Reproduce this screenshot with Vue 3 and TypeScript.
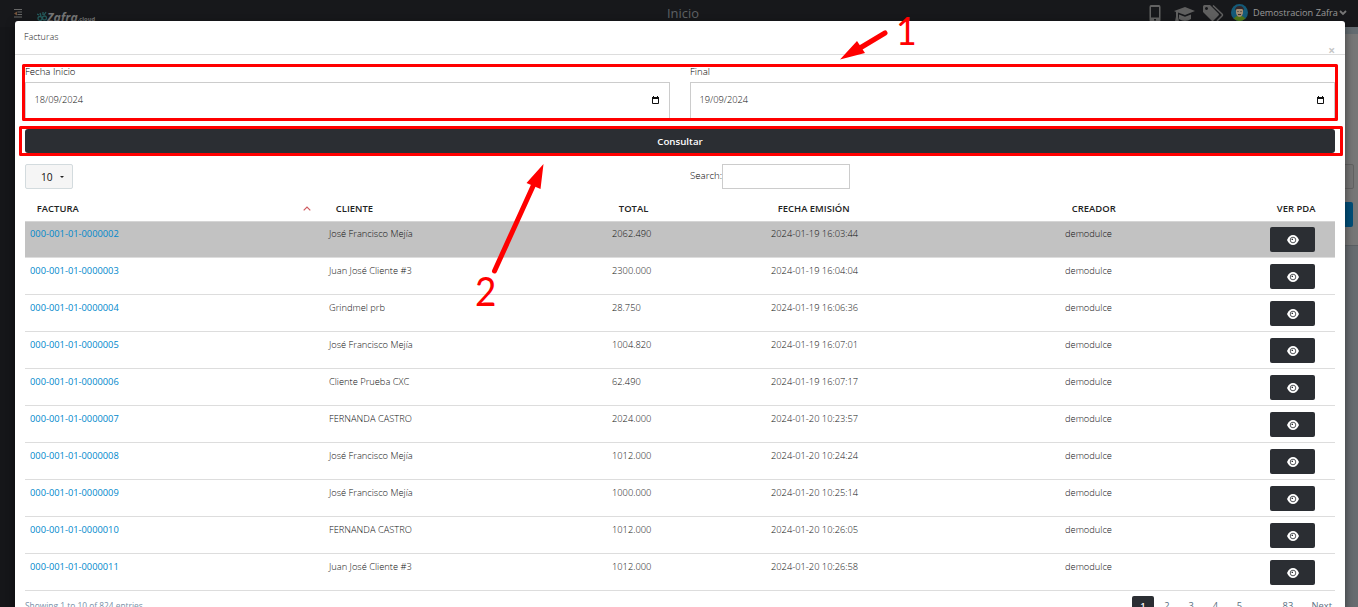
<script setup lang="ts">
interface Invoice {
  id: string
  client: string
  total: string
  date: string
}

const invoices: Invoice[] = [
  { id: '000-001-01-0000002', client: 'José Francisco Mejía', total: '2062.490', date: '2024-01-19 16:03:44' },
  { id: '000-001-01-0000003', client: 'Juan José Cliente #3', total: '2300.000', date: '2024-01-19 16:04:04' },
  { id: '000-001-01-0000004', client: 'Grindmel prb', total: '28.750', date: '2024-01-19 16:06:36' },
  { id: '000-001-01-0000005', client: 'José Francisco Mejía', total: '1004.820', date: '2024-01-19 16:07:01' },
  { id: '000-001-01-0000006', client: 'Cliente Prueba CXC', total: '62.490', date: '2024-01-19 16:07:17' },
  { id: '000-001-01-0000007', client: 'FERNANDA CASTRO', total: '2024.000', date: '2024-01-20 10:23:57' },
  { id: '000-001-01-0000008', client: 'José Francisco Mejía', total: '1012.000', date: '2024-01-20 10:24:24' },
  { id: '000-001-01-0000009', client: 'José Francisco Mejía', total: '1000.000', date: '2024-01-20 10:25:14' },
  { id: '000-001-01-0000010', client: 'FERNANDA CASTRO', total: '1012.000', date: '2024-01-20 10:26:05' },
  { id: '000-001-01-0000011', client: 'Juan José Cliente #3', total: '1012.000', date: '2024-01-20 10:26:58' },
]
const headers = ['FACTURA', 'CLIENTE', 'TOTAL', 'FECHA EMISIÓN', 'CREADOR', 'VER PDA']
const dates = [
  { label: 'Fecha Inicio', value: '18/09/2024' },
  { label: 'Final', value: '19/09/2024' },
]
const pages = ['1', '2', '3', '4', '5', '…', '83', 'Next']
</script>

<template>
  <div class="screen">
    <header class="topbar">
      <svg class="menu-icon" width="9" height="9" viewBox="0 0 9 9">
        <path d="M0 .5h8M3.500 3h4.500M3.500 5.500h4.500M0 8h8" stroke="#686868" stroke-width="1" />
        <path d="M3 2.500v4L0 4.500z" fill="#76543b" />
      </svg>
      <div class="brand">
        <svg width="10" height="11" viewBox="0 0 10 11" fill="none" stroke="#245a5b" stroke-width="1.300">
          <circle cx="3" cy="7.500" r="2" /><circle cx="7.500" cy="7" r="2" />
          <path d="M0 3l2 1M3 2l1 3M9 1L7 4M6 1v3" />
        </svg>
        <b>Zafra</b><small>.cloud</small>
      </div>
      <div class="page-title">Inicio</div>
      <div class="tools">
        <svg class="phone" width="12" height="18" viewBox="0 0 12 18">
          <path fill="#626262" fill-rule="evenodd" d="M2 0h8q1.500 0 1.500 2v13q0 2-1.500 2H2Q.5 17 .5 15V2Q.5 0 2 0zm0 2v10.500h8V2zm3 12v1.500h2V14z" />
        </svg>
        <svg class="cap" width="21" height="16" viewBox="0 0 21 16">
          <path fill="#5f5f5f" d="M0 4L11 0l10 4-10 4-7-2.500v4l1 5H1l1-5V5zM5 7.500l6 2.300 6-2.300V12q-6 4-12 0z" />
        </svg>
        <svg class="tags" width="21" height="18" viewBox="0 0 21 18">
          <path fill="#5f5f5f" fill-rule="evenodd" d="M0 1.500Q0 0 1.500 0H7l8.500 8.500q1 1 0 2l-5 5q-1 1-2 0L0 7zM3.500 2A1.500 1.500 0 1 0 3.510 2z" />
          <path fill="none" stroke="#5f5f5f" stroke-width="1.500" d="M10 .5l9 8.500q1 1 0 2L14 16" />
        </svg>
        <svg class="avatar" width="17" height="17" viewBox="0 0 17 17">
          <circle cx="8.500" cy="8.500" r="8.500" fill="#145a78" />
          <path d="M2.500 14.500q6-6 12 0-6 5-12 0" fill="#527817" />
          <path d="M5 5h7v4q-1 4-3.500 4T5 9z" fill="#a08b72" />
          <path d="M4 6.500q0-4.500 4.500-4.500T13 6.500l-2-1.500H6z" fill="#34282a" />
          <path d="M6.500 7.500h1M9.500 7.500h1M7 10.500h3" stroke="#342f2f" />
        </svg>
        <span>Demostracion Zafra</span>
        <svg class="chev" width="8" height="6" viewBox="0 0 8 6"><path d="M1 1l3 3 3-3" fill="none" stroke="#777" stroke-width="1.800" /></svg>
      </div>
    </header>
    <div class="backdrop">
      <div class="side" />
      <div class="under">
        <div class="strip" />
        <div class="panel"><i class="ghost-input" /><i class="ghost-button" /></div>
        <div class="ground" />
      </div>
    </div>

    <section class="modal">
      <div class="modal-head"><span>Facturas</span><span class="close">×</span></div>
      <div class="body">
        <div class="dates">
          <div v-for="d in dates" :key="d.label" class="field">
            <label>{{ d.label }}</label>
            <div class="input">
              <span>{{ d.value }}</span>
              <svg width="7" height="8" viewBox="0 0 7 8"><path d="M.5 1.500h6v6h-6z" fill="none" stroke="#111" /><path d="M0 1h7v2H0zM1 0h1v1H1zM5 0h1v1H5z" fill="#111" /></svg>
            </div>
          </div>
        </div>
        <button class="query">Consultar</button>
        <div class="controls">
          <div class="length"><span>10</span><i /></div>
          <div class="search"><span>Search:</span><div class="search-box" /></div>
        </div>
        <div class="row thead">
          <div v-for="(h, i) in headers" :key="h" class="th">
            <span>{{ h }}</span>
            <svg v-if="i === 0" width="8" height="5" viewBox="0 0 8 5"><path d="M.7 4.300L4 1l3.300 3.300" fill="none" stroke="#cf5a5f" stroke-width="1.200" /></svg>
          </div>
        </div>
        <div v-for="(r, i) in invoices" :key="r.id" class="row line" :class="{ active: i === 0 }">
          <a>{{ r.id }}</a>
          <span>{{ r.client }}</span>
          <span>{{ r.total }}</span>
          <span>{{ r.date }}</span>
          <span>demodulce</span>
          <button class="eye">
            <svg width="12" height="10" viewBox="0 0 12 10">
              <path d="M0 5Q2.200 0 6 0t6 5Q9.800 10 6 10T0 5z" fill="#fff" />
              <circle cx="6" cy="5" r="2.800" fill="none" stroke="#2b2e33" stroke-width=".8" />
              <path d="M4.400 5q0-1.600 1.600-1.600V5z" fill="#2b2e33" />
            </svg>
          </button>
        </div>
        <div class="foot">
          <span class="info">Showing 1 to 10 of 824 entries</span>
          <div class="pager"><span v-for="(p, i) in pages" :key="p" :class="{ current: i === 0, next: p === 'Next' }">{{ p }}</span></div>
        </div>
      </div>
    </section>

    <svg class="notes" width="1358" height="607" viewBox="0 0 1358 607">
      <g fill="none" stroke="#f00" stroke-width="3" stroke-linejoin="round">
        <rect x="23.500" y="65.500" width="1313" height="54" />
        <rect x="20.500" y="127.500" width="1321" height="27" />
      </g>
      <g stroke="#f00" stroke-width="5" stroke-linecap="round">
        <path d="M885 33L860 48M494.500 271L534 184" />
      </g>
      <path d="M840 59.500L857 41l8 12zM543.500 164l-3 25-14-6z" fill="#f00" />
      <text transform="translate(896 44.700) scale(.93 1)">1</text>
      <text transform="translate(475 305.800) scale(.96 1.060)">2</text>
    </svg>
  </div>
</template>

<style>
html, body { margin: 0; overflow: hidden; }
</style>

<style scoped>
* { box-sizing: border-box; }
.screen { position: relative; width: 1358px; height: 607px; overflow: hidden; background: #151619; font: 300 9.3px/14px "Open Sans", sans-serif; color: #111; }
.topbar { height: 27px; display: flex; background: #17181b; position: relative; }
.menu-icon { margin: 9px 0 0 14px; }
.brand { display: flex; margin: 11px 0 0 14px; color: #747474; height: 16px; }
.brand b { font: italic 700 12.2px/13px "Open Sans", sans-serif; }
.brand small { font: 700 5.8px/16px "Open Sans", sans-serif; }
.page-title { position: absolute; left: 667px; top: 4px; font: 400 12.9px/19px "Open Sans", sans-serif; color: #5f6265; }
.tools { position: absolute; left: 1149px; top: 0; display: flex; color: #999; font: 400 9.2px/25px "Open Sans", sans-serif; }
.phone { margin-top: 5px; }
.cap { margin: 7px 0 0 13px; }
.tags { margin: 5px 0 0 8px; }
.avatar { margin: 4px 5px 0 7px; }
.chev { margin: 10px 0 0 1px; }
.backdrop { display: flex; justify-content: space-between; height: 580px; }
.side { width: 15px; background: #151619; }
.under { width: 14px; }
.strip { height: 7px; background: #636b70; }
.panel { height: 212px; background: #777; display: flex; flex-direction: column; padding-top: 130px; border-bottom: 1px solid #5b6064; }
.ghost-input { height: 25px; width: 10px; border: 1px solid #626262; border-radius: 0 2px 2px 0; background: #747474; flex: none; }
.ghost-button { height: 25px; width: 9px; margin-top: 13px; background: #004e78; border-radius: 0 2px 2px 0; flex: none; }
.ground { height: 370px; background: #676c70; }
.modal { position: absolute; left: 15px; top: 21px; width: 1330px; height: 600px; background: #fff; border-radius: 3px 3px 0 0; box-shadow: 0 3px 9px rgba(0,0,0,.5); }
.modal-head { height: 34px; border-bottom: 1px solid #ddd; display: flex; justify-content: space-between; padding: 9px 9px 0; color: #222; font-size: 9px; }
.close { font: 700 12px/14px "Open Sans", sans-serif; color: #c6c6c6; margin: 14px 1px 0 0; }
.body { padding: 9px 10px 0; }
.dates { display: grid; grid-template-columns: 645px 645px; gap: 20px; height: 65px; }
.field { overflow: hidden; }
label { display: block; height: 18px; line-height: 16px; color: #000; font-size: 9.6px; }
.input { height: 37px; border: 1px solid #ccc; display: flex; justify-content: space-between; align-items: center; padding: 0 10px 2px 8.400px; }
.query { display: block; width: 1310px; height: 24px; border: 0; border-radius: 3px; background: #2b2e33; color: #fff; font: 600 9.7px/24px "Open Sans", sans-serif; padding: 1px 0 0; }
.controls { display: flex; height: 43px; padding-top: 11px; }
.length { width: 48px; height: 25px; border: 1px solid #d3dbde; border-radius: 2px; background: #f5f5f5; display: flex; padding-left: 15px; font: 400 10.2px/25px "Open Sans", sans-serif; }
.length i { border: 2px solid transparent; border-top-color: #222; border-bottom: 0; height: 2px; margin: 11px 0 0 7px; }
.search { display: flex; margin-left: 617px; line-height: 23px; }
.search span { width: 32px; font-size: 9.7px; color: #000; }
.search-box { width: 128px; height: 25px; border: 1px solid #ccc; }
.row { display: grid; grid-template-columns: 299px 283px 159px 294px 205px 70px; }
.thead { height: 25px; }
.th { padding: 5px 13px 0 11.800px; display: flex; justify-content: space-between; font: 600 9.45px/15px "Open Sans", sans-serif; color: #222; white-space: nowrap; }
.th:last-child { padding-right: 0; }
.th svg { margin-top: 5px; }
.line { height: 37px; border-bottom: 1px solid #ddd; }
.line > * { margin: 6px 0 0 5px; }
.line.active { background: #c2c2c2; border-top: 1px solid #d5d5d5; }
.line.active > * { margin-top: 5px; }
.line a { color: #0088cc; font-weight: 400; }
.line .eye { width: 45px; height: 25px; border: 0; border-radius: 2px; background: #2b2e33; padding: 0; }
.eye svg { display: block; margin: 0 auto; }
.foot { display: flex; justify-content: space-between; padding-top: 4px; }
.info { color: #7890a8; font-weight: 400; font-size: 8.4px; padding-top: 4px; }
.pager { display: flex; margin-top: 1px; margin-right: 2px; font-weight: 400; color: #576d80; line-height: 19px; }
.pager span { width: 24.200px; text-align: center; }
.pager .current { width: 22px; height: 24px; background: #2b2e33; border-radius: 2px; color: #fff; font-weight: 600; margin-right: 1px; }
.pager .next { width: 33px; text-align: right; padding-right: 1px; }
.notes { position: absolute; left: 0; top: 0; }
.notes text { font: 400 38.500px Lato, sans-serif; fill: #f00; }
</style>
